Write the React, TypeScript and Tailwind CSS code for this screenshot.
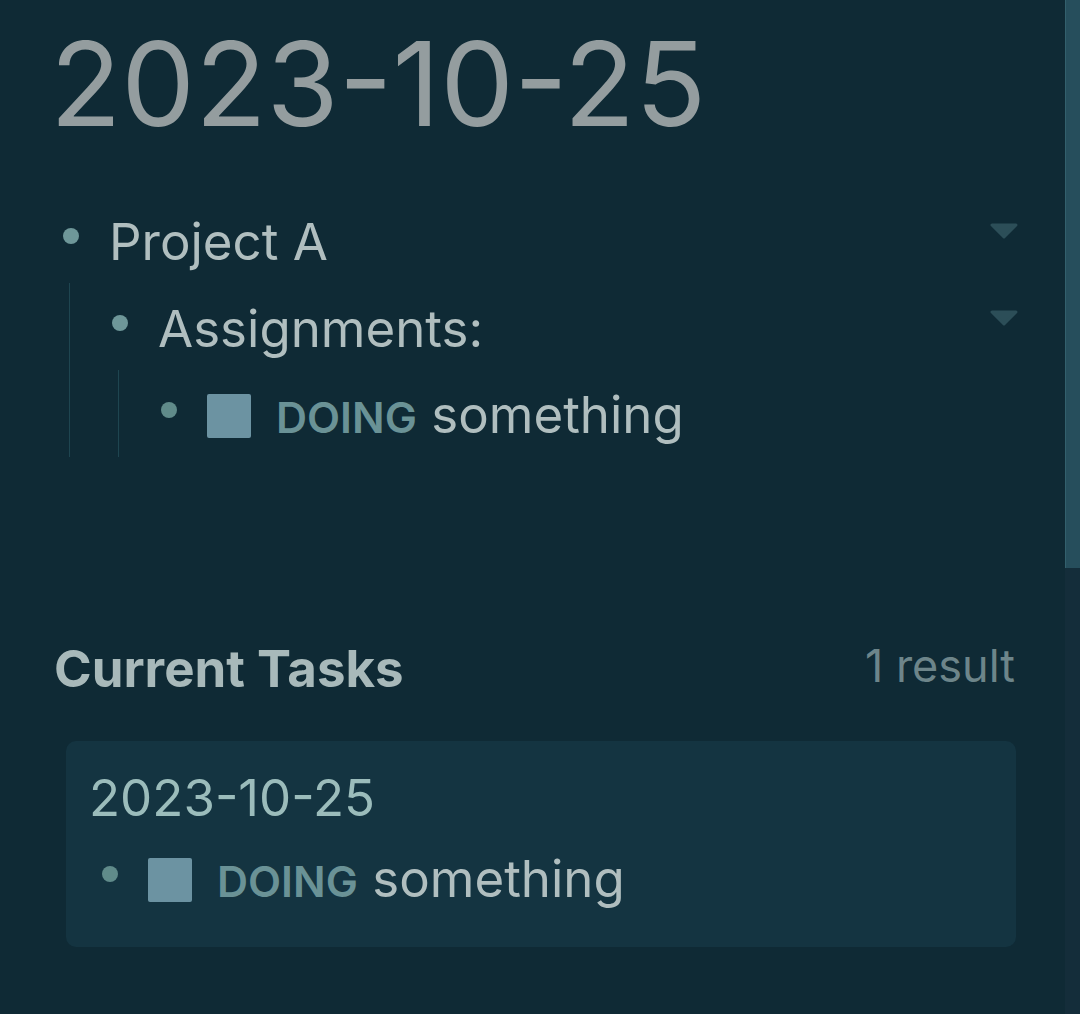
import React from "react";

const Bullet = ({ light = false }: { light?: boolean }) => (
  <div className="w-[42px] shrink-0 flex justify-center">
    <span
      className={
        light
          ? "block w-[16px] h-[16px] rounded-full bg-[#6e9799] -translate-y-[6px]"
          : "block w-[16px] h-[16px] rounded-full bg-[#608b8a] -translate-y-[6px]"
      }
    />
  </div>
);

const Caret = () => (
  <div className="ml-auto shrink-0 -translate-y-[11px]">
    <svg width="28" height="16" viewBox="0 0 28 16">
      <polygon
        points="2,2 26,2 14,14"
        fill="#2c4e58"
        stroke="#2c4e58"
        strokeWidth="3"
        strokeLinejoin="round"
      />
    </svg>
  </div>
);

const Checkbox = () => (
  <span className="block w-[44px] h-[44px] shrink-0 bg-[#6c93a2] rounded-[2px]" />
);

const TaskText = () => (
  <span className="ml-[25px] whitespace-nowrap">
    <span className="text-[43px] font-semibold text-[#6a9296]">DOING</span>
    <span className="text-[#b0bebf]"> something</span>
  </span>
);

export default function App() {
  return (
    <div
      className="w-[1080px] h-[1014px] bg-[#0f2a35] flex overflow-hidden"
      style={{ fontFamily: "Inter, 'Noto Sans', sans-serif" }}
    >
      <main className="flex-1 pl-[50px] pr-[47px]">
        <h1 className="pt-[25px] text-[117px] leading-none font-normal text-[#949d9f]">
          2023-10-25
        </h1>

        <div className="mt-[59px] text-[51px] text-[#b0bebf]">
          <div className="flex items-center h-[82px] leading-[82px]">
            <Bullet light />
            <span className="ml-[17px]">Project A</span>
            <Caret />
          </div>
          <div className="ml-[19px] border-l border-[#1e4550] pl-[29px] pt-[5px]">
            <div className="flex items-center h-[82px] leading-[82px]">
              <Bullet light />
              <span className="ml-[17px]">Assignments:</span>
              <Caret />
            </div>
            <div className="ml-[19px] border-l border-[#1e4550] pl-[29px] pt-[5px]">
              <div className="flex items-center h-[82px] leading-[82px]">
                <Bullet />
                <span className="ml-[17px] flex items-center">
                  <Checkbox />
                  <TaskText />
                </span>
              </div>
            </div>
          </div>
        </div>

        <section className="mt-[186px]">
          <div className="flex items-start justify-between">
            <h2 className="text-[51px] leading-none font-bold text-[#a8b9ba] pl-[4px]">
              Current Tasks
            </h2>
            <span className="text-[45px] leading-none text-[#6d858a] mr-[3px]">1 result</span>
          </div>
          <div className="mt-[47px] ml-[16px] mr-[2px] h-[206px] rounded-[10px] bg-[#143441] pt-[31px] pl-[23px]">
            <div className="text-[51px] leading-none text-[#9bbcbb]">2023-10-25</div>
            <div className="mt-[16px] flex items-center h-[82px] leading-[82px] text-[51px]">
              <Bullet />
              <span className="ml-[17px] flex items-center">
                <Checkbox />
                <TaskText />
              </span>
            </div>
          </div>
        </section>
      </main>

      <div className="w-[15px] shrink-0 flex flex-col">
        <div className="h-[568px] bg-[#264e5c] border-l border-[#33606d]" />
        <div className="flex-1 bg-[#142d3a]" />
      </div>
    </div>
  );
}
